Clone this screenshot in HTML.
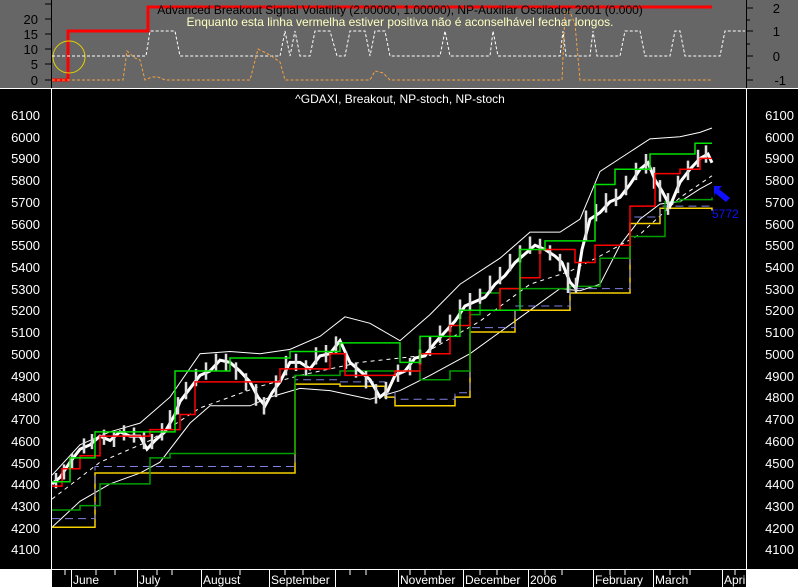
<!DOCTYPE html>
<html><head><meta charset="utf-8"><style>
body{margin:0;width:798px;height:587px;overflow:hidden;background:#fff;font-family:"Liberation Sans",sans-serif}
svg{display:block}
text{font-family:"Liberation Sans",sans-serif}
</style></head><body>
<svg width="798" height="587" viewBox="0 0 798 587" xmlns="http://www.w3.org/2000/svg">
<rect x="0" y="0" width="798" height="88" fill="#666"/>
<line x1="51.5" y1="0" x2="51.5" y2="88" stroke="#000"/>
<line x1="746.5" y1="0" x2="746.5" y2="88" stroke="#000"/>
<g fill="#000" font-size="13">
<text x="38" y="24" text-anchor="end">20</text><text x="38" y="39" text-anchor="end">15</text>
<text x="38" y="54" text-anchor="end">10</text><text x="38" y="69" text-anchor="end">5</text>
<text x="38" y="85" text-anchor="end">0</text>
<text x="780" y="13" text-anchor="end">2</text><text x="780" y="36" text-anchor="end">1</text>
<text x="780" y="61" text-anchor="end">0</text><text x="786" y="85" text-anchor="end">-1</text>
</g>
<g stroke="#000"><path d="M45 4H52M45 19H52M45 34H52M45 49H52M45 64H52M45 80H52M746 8H753M746 31H753M746 56H753M746 80H753M746 20H750M746 44H750M746 68H750"/></g>
<path d="M52 80H68V31H148V7H712" stroke="#f00" stroke-width="3" fill="none"/>
<circle cx="69" cy="57" r="16" stroke="#e8d000" fill="none"/>
<path d="M52 56H146L150 31H175L180 56H280L285 31L290 56L295 31L300 56H310L315 31H330L337 56H345L350 31H365L370 56L375 31H385L390 56H440L445 31L450 56H490L493 31L498 56H560L563 31L566 56H590L593 31L597 56H620L625 31H640L645 56H670L675 31H680L685 56H720L725 31H745" stroke="#fff" stroke-dasharray="3,2" fill="none"/>
<path d="M52 80H123L127 51L135 58L140 60L145 80L152 77H158L165 80H250L258 49L270 55L280 62L285 80H370L375 71L383 73L390 80H562L565 12H570L575 24L580 80H712" stroke="#f4a040" stroke-dasharray="3,2" fill="none"/>
<text x="400" y="14" font-size="12" text-anchor="middle" fill="#000">Advanced Breakout Signal Volatility (2.00000, 1.00000), NP-Auxiliar Oscilador 2001 (0.000)</text>
<text x="400" y="26" font-size="12" text-anchor="middle" fill="#ffffc0">Enquanto esta linha vermelha estiver positiva não é aconselhável fechar longos.</text>
<line x1="0" y1="88.5" x2="798" y2="88.5" stroke="#fff"/>
<rect x="0" y="89" width="798" height="480" fill="#000"/>
<line x1="51.5" y1="89" x2="51.5" y2="587" stroke="#fff"/>
<line x1="746.5" y1="89" x2="746.5" y2="569" stroke="#fff"/>
<g fill="#fff" font-size="13">
<text x="40" y="120" text-anchor="end">6100</text><text x="40" y="142" text-anchor="end">6000</text><text x="40" y="163" text-anchor="end">5900</text><text x="40" y="185" text-anchor="end">5800</text><text x="40" y="207" text-anchor="end">5700</text><text x="40" y="229" text-anchor="end">5600</text><text x="40" y="250" text-anchor="end">5500</text><text x="40" y="272" text-anchor="end">5400</text><text x="40" y="294" text-anchor="end">5300</text><text x="40" y="315" text-anchor="end">5200</text><text x="40" y="337" text-anchor="end">5100</text><text x="40" y="359" text-anchor="end">5000</text><text x="40" y="381" text-anchor="end">4900</text><text x="40" y="402" text-anchor="end">4800</text><text x="40" y="424" text-anchor="end">4700</text><text x="40" y="446" text-anchor="end">4600</text><text x="40" y="468" text-anchor="end">4500</text><text x="40" y="489" text-anchor="end">4400</text><text x="40" y="511" text-anchor="end">4300</text><text x="40" y="533" text-anchor="end">4200</text><text x="40" y="554" text-anchor="end">4100</text>
<text x="794" y="120" text-anchor="end">6100</text><text x="794" y="142" text-anchor="end">6000</text><text x="794" y="163" text-anchor="end">5900</text><text x="794" y="185" text-anchor="end">5800</text><text x="794" y="207" text-anchor="end">5700</text><text x="794" y="229" text-anchor="end">5600</text><text x="794" y="250" text-anchor="end">5500</text><text x="794" y="272" text-anchor="end">5400</text><text x="794" y="294" text-anchor="end">5300</text><text x="794" y="315" text-anchor="end">5200</text><text x="794" y="337" text-anchor="end">5100</text><text x="794" y="359" text-anchor="end">5000</text><text x="794" y="381" text-anchor="end">4900</text><text x="794" y="402" text-anchor="end">4800</text><text x="794" y="424" text-anchor="end">4700</text><text x="794" y="446" text-anchor="end">4600</text><text x="794" y="468" text-anchor="end">4500</text><text x="794" y="489" text-anchor="end">4400</text><text x="794" y="511" text-anchor="end">4300</text><text x="794" y="533" text-anchor="end">4200</text><text x="794" y="554" text-anchor="end">4100</text>
</g>
<text x="400" y="103" font-size="12" text-anchor="middle" fill="#fff">^GDAXI, Breakout, NP-stoch, NP-stoch</text>
<g transform="matrix(1,0,0,-0.217,0,1438.7)" fill="none">
<path vector-effect="non-scaling-stroke" stroke="#fff" d="M52 4440L80 4580L110 4640L140 4680L170 4800L200 5000L230 5010L260 5000L290 5020L320 5080L345 5170L370 5140L400 5060L430 5180L460 5320L500 5440L530 5560L560 5560L580 5620L600 5840L630 5930L650 5990L680 6000L700 6020L712 6040"/>
<path vector-effect="non-scaling-stroke" stroke="#fff" d="M52 4200L80 4320L110 4400L140 4450L160 4500L190 4680L210 4760L250 4760L270 4800L300 4840L330 4830L370 4790L400 4830L430 4900L470 5000L500 5100L530 5200L560 5300L580 5290L600 5320L620 5500L640 5620L660 5690L680 5700L700 5760L712 5790"/>
<path vector-effect="non-scaling-stroke" stroke="#fff" stroke-dasharray="4,4" d="M52 4330L100 4500L150 4600L200 4750L260 4850L300 4900L360 4960L420 4990L480 5150L530 5320L570 5380L600 5450L640 5550L680 5720L712 5820"/>
<path vector-effect="non-scaling-stroke" stroke="#f7d000" stroke-width="1.5" d="M52 4200H95V4450H150V4450H295V4860H340V4850H385V4800H395V4760H455V4800H470V5100H515V5200H570V5280H630V5600H660V5640V5670H712V5660"/>
<path vector-effect="non-scaling-stroke" stroke="#8080e0" stroke-dasharray="8,5" d="M52 4240H95V4480H150V4480H295V4880H340V4870H385V4820H395V4790H455V4820H470V5120H515V5220H570V5300H630V5630H660V5680H712V5680"/>
<path vector-effect="non-scaling-stroke" stroke="#00a000" stroke-width="1.5" d="M52 4280H80V4300H100V4400H150V4520H170V4540H295V4900H340V4920H420V4880H450V4920H470V5180H480V5280H500V5300H570V5310H600V5440H630V5540H665V5700H680V5710H712V5720"/>
<path vector-effect="non-scaling-stroke" stroke="#fff" stroke-width="3" d="M52 4400L60 4430L70 4500L80 4560L90 4580L100 4620L110 4600L120 4640L130 4620L140 4620L147 4560L155 4600L165 4640L175 4720L180 4780L190 4840L200 4900L210 4920L220 4970L230 4960L240 4920L250 4870L258 4800L265 4760L272 4820L280 4870L290 4960L300 4960L310 4930L320 4990L330 5000L340 5060L350 4960L360 4920L370 4880L380 4800L388 4830L395 4900L405 4920L415 4980L425 4990L435 5050L445 5100L455 5150L465 5220L475 5240L485 5260L495 5320L505 5360L515 5420L525 5460L535 5500L545 5480L555 5450L562 5420L570 5330L576 5300L582 5480L590 5620L600 5650L610 5700L620 5720L630 5780L640 5850L648 5880L655 5800L662 5750L670 5680L680 5790L690 5850L700 5900L708 5920L712 5880"/>
<path vector-effect="non-scaling-stroke" stroke="#ddd" stroke-width="2.5" d="M56 4380V4450M64 4420V4490M72 4470V4540M84 4540V4610M92 4560V4630M104 4580V4650M114 4570V4640M124 4600V4670M134 4590V4660M144 4560V4640M152 4560V4630M162 4600V4680M170 4650V4740M178 4720V4800M186 4790V4870M196 4850V4930M206 4880V4960M216 4920V5000M226 4920V5000M236 4880V4960M246 4830V4910M256 4760V4860M264 4720V4800M276 4800V4900M286 4900V4990M296 4920V5000M306 4900V4970M316 4950V5030M326 4960V5040M336 5000V5080M346 4930V5010M356 4890V4960M366 4840V4920M376 4770V4860M386 4790V4870M398 4870V4950M410 4900V4980M420 4950V5020M430 4990V5080M440 5050V5130M450 5100V5180M460 5160V5250M470 5200V5280M480 5230V5300M490 5280V5360M500 5320V5400M510 5380V5460M520 5420V5500M530 5460V5540M540 5460V5530M550 5430V5500M560 5380V5460M568 5280V5420M576 5280V5350M586 5520V5660M596 5610V5690M606 5650V5740M616 5680V5760M626 5730V5820M636 5800V5880M646 5830V5920M654 5760V5860M660 5700V5800M668 5640V5740M678 5740V5820M688 5800V5890M698 5860V5940M706 5880V5960"/>
<path vector-effect="non-scaling-stroke" stroke="#f00" stroke-width="1.5" d="M52 4390H62V4470H80V4530H100V4620H150V4650H180V4720H195V4870H225V4870H280V4930H330V5000H345V4900H395V4920H420V5000H450V5130H470V5200H500V5300H520V5350H540V5480H575V5420H595V5500H630V5680H655V5830H680V5850H700V5900H712"/>
<path vector-effect="non-scaling-stroke" stroke="#00e000" stroke-width="1.5" d="M52 4410H70V4520H95V4640H175V4920H230V4980H290V5010H340V5050H400V4960H420V5080H460V5200H520V5480H545V5520H595V5780H615V5850H650V5920H695V5970H712"/>
</g>
<path d="M714 186L722 186L719 189L730 198L726 202L715 193L714 197Z" fill="#1010ff"/>
<text x="712" y="218" font-size="12" fill="#1010ff">5772</text>
<rect x="52" y="569" width="694" height="18" fill="#000"/>
<line x1="52" y1="569.5" x2="746" y2="569.5" stroke="#fff"/>
<g stroke="#fff"><path d="M71.5 569V587M137.5 569V587M201.5 569V587M269.5 569V587M335.5 569V587M398.5 569V587M463.5 569V587M528.5 569V587M593.5 569V587M653.5 569V587M722.5 569V587M65 569V575M96 569V575M115 569V575M157 569V575M172 569V575M220 569V575M240 569V575M285 569V575M303 569V575M350 569V575M366 569V575M410 569V575M425 569V575M441 569V575M480 569V575M497 569V575M545 569V575M562 569V575M610 569V575M625 569V575M670 569V575M690 569V575M735 569V575"/></g>
<g fill="#fff" font-size="12">
<text x="73" y="584">June</text><text x="139" y="584">July</text><text x="203" y="584">August</text><text x="271" y="584">September</text><text x="400" y="584">November</text><text x="465" y="584">December</text><text x="530" y="584">2006</text><text x="595" y="584">February</text><text x="655" y="584">March</text><text x="724" y="584">Apri</text>
</g>
</svg>
</body></html>
